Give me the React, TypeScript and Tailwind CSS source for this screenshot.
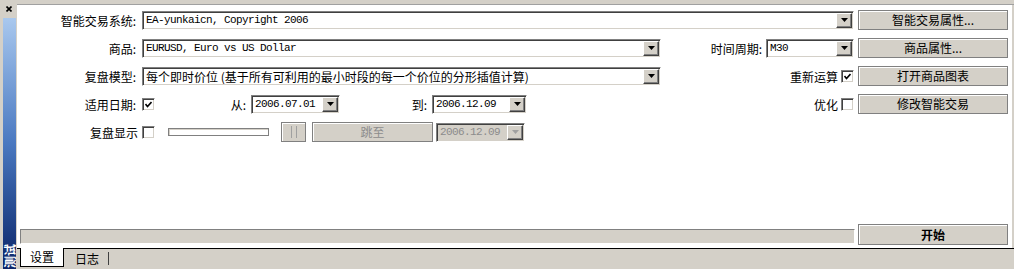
import React from "react";

const cjk = "font-['Noto_Sans_CJK_SC',sans-serif]";
const mono = "font-['Liberation_Mono','Noto_Sans_CJK_SC',monospace]";

const sunken =
  "border border-t-[#808080] border-l-[#808080] border-b-white border-r-white shadow-[inset_1px_1px_0_#404040,inset_-1px_-1px_0_#d4d0c8]";

const btnClass =
  "flex items-center justify-center border border-[#808080] bg-[#d4d0c8] shadow-[inset_1px_1px_0_#ffffff] text-[12px] leading-none";

const Arrow = ({ disabled }: { disabled?: boolean }) => (
  <div className="flex h-full w-[16px] shrink-0 items-center justify-center border border-t-white border-l-white border-b-[#404040] border-r-[#404040] bg-[#d4d0c8] shadow-[inset_-1px_-1px_0_#808080]">
    <svg width="7" height="4" viewBox="0 0 7 4">
      <polygon points="0,0 7,0 3.5,4" fill={disabled ? "#a0a0a0" : "#000"} />
    </svg>
  </div>
);

const Combo = ({
  text,
  className = "",
  textClass = mono + " text-[11px] tracking-[-0.6px]",
  disabled,
}: {
  text: string;
  className?: string;
  textClass?: string;
  disabled?: boolean;
}) => (
  <div
    className={`${sunken} flex h-[19px] items-center p-[1px] ${disabled ? "bg-[#d4d0c8]" : "bg-white"} ${className}`}
  >
    <span
      className={`flex-1 overflow-hidden whitespace-nowrap pl-[2px] leading-[15px] ${textClass} ${disabled ? "text-[#8c8c8c]" : "text-black"}`}
    >
      {text}
    </span>
    <Arrow disabled={disabled} />
  </div>
);

const Check = ({ checked }: { checked?: boolean }) => (
  <div className={`${sunken} flex h-[13px] w-[13px] shrink-0 items-center justify-center bg-white`}>
    {checked && (
      <svg width="7" height="7" viewBox="0 0 7 7">
        <polyline points="0.5,3 2.5,5.5 6.5,1" fill="none" stroke="#000" strokeWidth="1.6" />
      </svg>
    )}
  </div>
);

const Label = ({ children, className = "" }: { children: React.ReactNode; className?: string }) => (
  <span className={`${cjk} text-right text-[12px] leading-[15px] text-black ${className}`}>{children}</span>
);

const SideButton = ({ children }: { children: React.ReactNode }) => (
  <div className={`${btnClass} ${cjk} ml-[4px] h-[20px] w-[150px] shrink-0 text-black`}>{children}</div>
);

export default function App() {
  return (
    <div className="flex h-[269px] w-[1014px] overflow-hidden bg-[#d4d0c8] select-none">
      {/* left dock strip */}
      <div className="flex w-[17px] shrink-0 flex-col">
        <div className="flex h-[18px] items-start pl-[6px] pt-[6px]">
          <svg width="6" height="6" viewBox="0 0 6 6">
            <path d="M0.5 0.5 L5.5 5.5 M5.5 0.5 L0.5 5.5" stroke="#000" strokeWidth="1.6" />
          </svg>
        </div>
        <div className="ml-[3px] flex w-[13px] flex-1 flex-col items-center justify-end bg-gradient-to-b from-[#a9c8ee] via-[#4a78c0] to-[#0c2468] pb-[1px]">
          <span
            className={`${cjk} rotate-180 text-[12px] font-bold leading-[13px] text-white [writing-mode:vertical-rl] [text-orientation:sideways]`}
          >
            测试
          </span>
        </div>
      </div>

      {/* main area */}
      <div className="flex flex-1 flex-col">
        <div className="h-[5px] shrink-0 border-b border-[#a0a0a0] bg-[#d4d0c8]" />

        <div className="mr-[2px] flex flex-1 flex-col bg-white pr-[4px] pt-[5px]">
          {/* row 1 */}
          <div className="flex h-[20px] items-center">
            <Label className="w-[124px] pr-[5px]">智能交易系统:</Label>
            <Combo text="EA-yunkaicn, Copyright 2006" className="ml-[1px] flex-1" />
            <SideButton>智能交易属性...</SideButton>
          </div>

          {/* row 2 */}
          <div className="mt-[8px] flex h-[20px] items-center">
            <Label className="w-[124px] pr-[5px]">商品:</Label>
            <Combo text="EURUSD, Euro vs US Dollar" className="ml-[1px] w-[519px]" />
            <Label className="flex-1 pr-[4px]">时间周期:</Label>
            <Combo text="M30" className="w-[88px]" />
            <SideButton>商品属性...</SideButton>
          </div>

          {/* row 3 */}
          <div className="mt-[8px] flex h-[20px] items-center">
            <Label className="w-[124px] pr-[5px]">复盘模型:</Label>
            <Combo
              text="每个即时价位 (基于所有可利用的最小时段的每一个价位的分形插值计算)"
              textClass={`${cjk} text-[12px]`}
              className="ml-[1px] w-[519px]"
            />
            <Label className="mr-[3px] flex-1">重新运算</Label>
            <Check checked />
            <SideButton>打开商品图表</SideButton>
          </div>

          {/* row 4 */}
          <div className="mt-[8px] flex h-[20px] items-center">
            <Label className="w-[124px] pr-[5px]">适用日期:</Label>
            <div className="ml-[1px]">
              <Check checked />
            </div>
            <Label className="w-[96px] pr-[5px]">从:</Label>
            <Combo text="2006.07.01" className="w-[89px]" />
            <Label className="w-[92px] pr-[5px]">到:</Label>
            <Combo text="2006.12.09" className="w-[95px]" />
            <Label className="mr-[3px] flex-1">优化</Label>
            <Check />
            <SideButton>修改智能交易</SideButton>
          </div>

          {/* row 5 */}
          <div className="mt-[8px] flex h-[20px] items-center">
            <Label className="w-[124px] pr-[3px]">复盘显示</Label>
            <div className="ml-[1px]">
              <Check />
            </div>
            <div className="ml-[13px] h-[8px] w-[101px] border border-[#808080] bg-white shadow-[inset_1px_1px_0_#d4d0c8]" />
            <div className={`${btnClass} ml-[12px] h-[20px] w-[25px] gap-[4px]`}>
              <span className="h-[12px] w-px bg-[#a0a0a0]" />
              <span className="h-[12px] w-px bg-[#a0a0a0]" />
            </div>
            <div className={`${btnClass} ${cjk} ml-[6px] h-[20px] w-[121px] text-[#8c8c8c]`}>跳至</div>
            <Combo text="2006.12.09" className="ml-[3px] w-[89px]" disabled />
          </div>

          <div className="flex-1" />

          {/* bottom row */}
          <div className="flex items-end pb-[3px]">
            <div className="mb-[1px] ml-[3px] h-[15px] flex-1 border border-t-[#808080] border-l-[#808080] border-b-white border-r-white bg-[#d4d0c8]" />
            <div className={`${btnClass} ${cjk} ml-[3px] h-[21px] w-[150px] font-bold text-black`}>开始</div>
          </div>
        </div>

        {/* tab bar */}
        <div className="flex h-[21px] shrink-0 items-start border-t border-black">
          <div
            className={`${cjk} -mt-px ml-[3px] flex h-[19px] w-[44px] items-center justify-center border-x border-b border-black bg-white text-[12px] text-black`}
          >
            设置
          </div>
          <span className={`${cjk} ml-[11px] mt-[2px] text-[12px] leading-[16px] text-black`}>日志</span>
          <span className="ml-[9px] mt-[3px] h-[13px] w-px bg-[#404040]" />
        </div>
      </div>
    </div>
  );
}
